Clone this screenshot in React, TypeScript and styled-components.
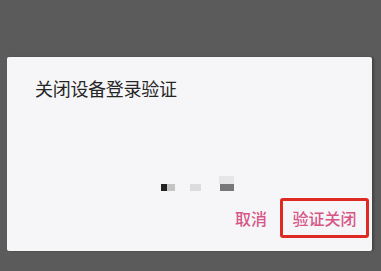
import React from 'react';
import styled, { createGlobalStyle } from 'styled-components';

const GlobalStyle = createGlobalStyle`
  html, body {
    margin: 0;
    padding: 0;
    background: #5b5b5b;
    font-family: "Noto Sans CJK SC", "Noto Sans", sans-serif;
  }
`;

const Screen = styled.div`
  width: 381px;
  height: 271px;
  padding: 57px 0 0 7px;
  box-sizing: border-box;
  overflow: hidden;
`;

const Dialog = styled.div`
  width: 365px;
  height: 194px;
  background: #f6f6f8;
  border-radius: 2px;
  box-shadow: 2px 0 2px rgba(0, 0, 0, 0.25);
  display: flex;
  flex-direction: column;
  box-sizing: border-box;
`;

const Title = styled.div`
  padding: 19px 0 0 28px;
  font-size: 18px;
  line-height: 24px;
  color: #262626;
  letter-spacing: -0.3px;
`;

const Mosaic = styled.div`
  margin: 76px 0 0 154px;
  display: flex;
  flex-direction: column;
`;

const MosaicRow = styled.div<{ $h: number }>`
  display: flex;
  height: ${(p) => p.$h}px;
`;

const Tile = styled.div<{ $w: number; $c: string; $gap?: number }>`
  width: ${(p) => p.$w}px;
  margin-left: ${(p) => p.$gap ?? 0}px;
  background: ${(p) => p.$c};
`;

const Footer = styled.div`
  margin-top: 7px;
  padding-right: 3px;
  display: flex;
  justify-content: flex-end;
  align-items: center;
`;

const TextButton = styled.div<{ $outlined?: boolean }>`
  height: 40px;
  box-sizing: border-box;
  display: flex;
  align-items: center;
  justify-content: center;
  font-size: 16px;
  font-weight: 500;
  color: #d65787;
  ${(p) =>
    p.$outlined
      ? `
    width: 89px;
    border: 3px solid #dd2a22;
    border-radius: 3px;
  `
      : `
    margin-right: 13px;
  `}
`;

export default function App() {
  return (
    <>
      <GlobalStyle />
      <Screen>
        <Dialog>
          <Title>关闭设备登录验证</Title>
          <Mosaic>
            <MosaicRow $h={8}>
              <Tile $w={15} $c="#e6e6e8" $gap={58} />
            </MosaicRow>
            <MosaicRow $h={7}>
              <Tile $w={6} $c="#222222" />
              <Tile $w={8} $c="#c4c4c4" />
              <Tile $w={11} $c="#dcdcde" $gap={15} />
              <Tile $w={14} $c="#777777" $gap={19} />
            </MosaicRow>
          </Mosaic>
          <Footer>
            <TextButton>取消</TextButton>
            <TextButton $outlined>验证关闭</TextButton>
          </Footer>
        </Dialog>
      </Screen>
    </>
  );
}
